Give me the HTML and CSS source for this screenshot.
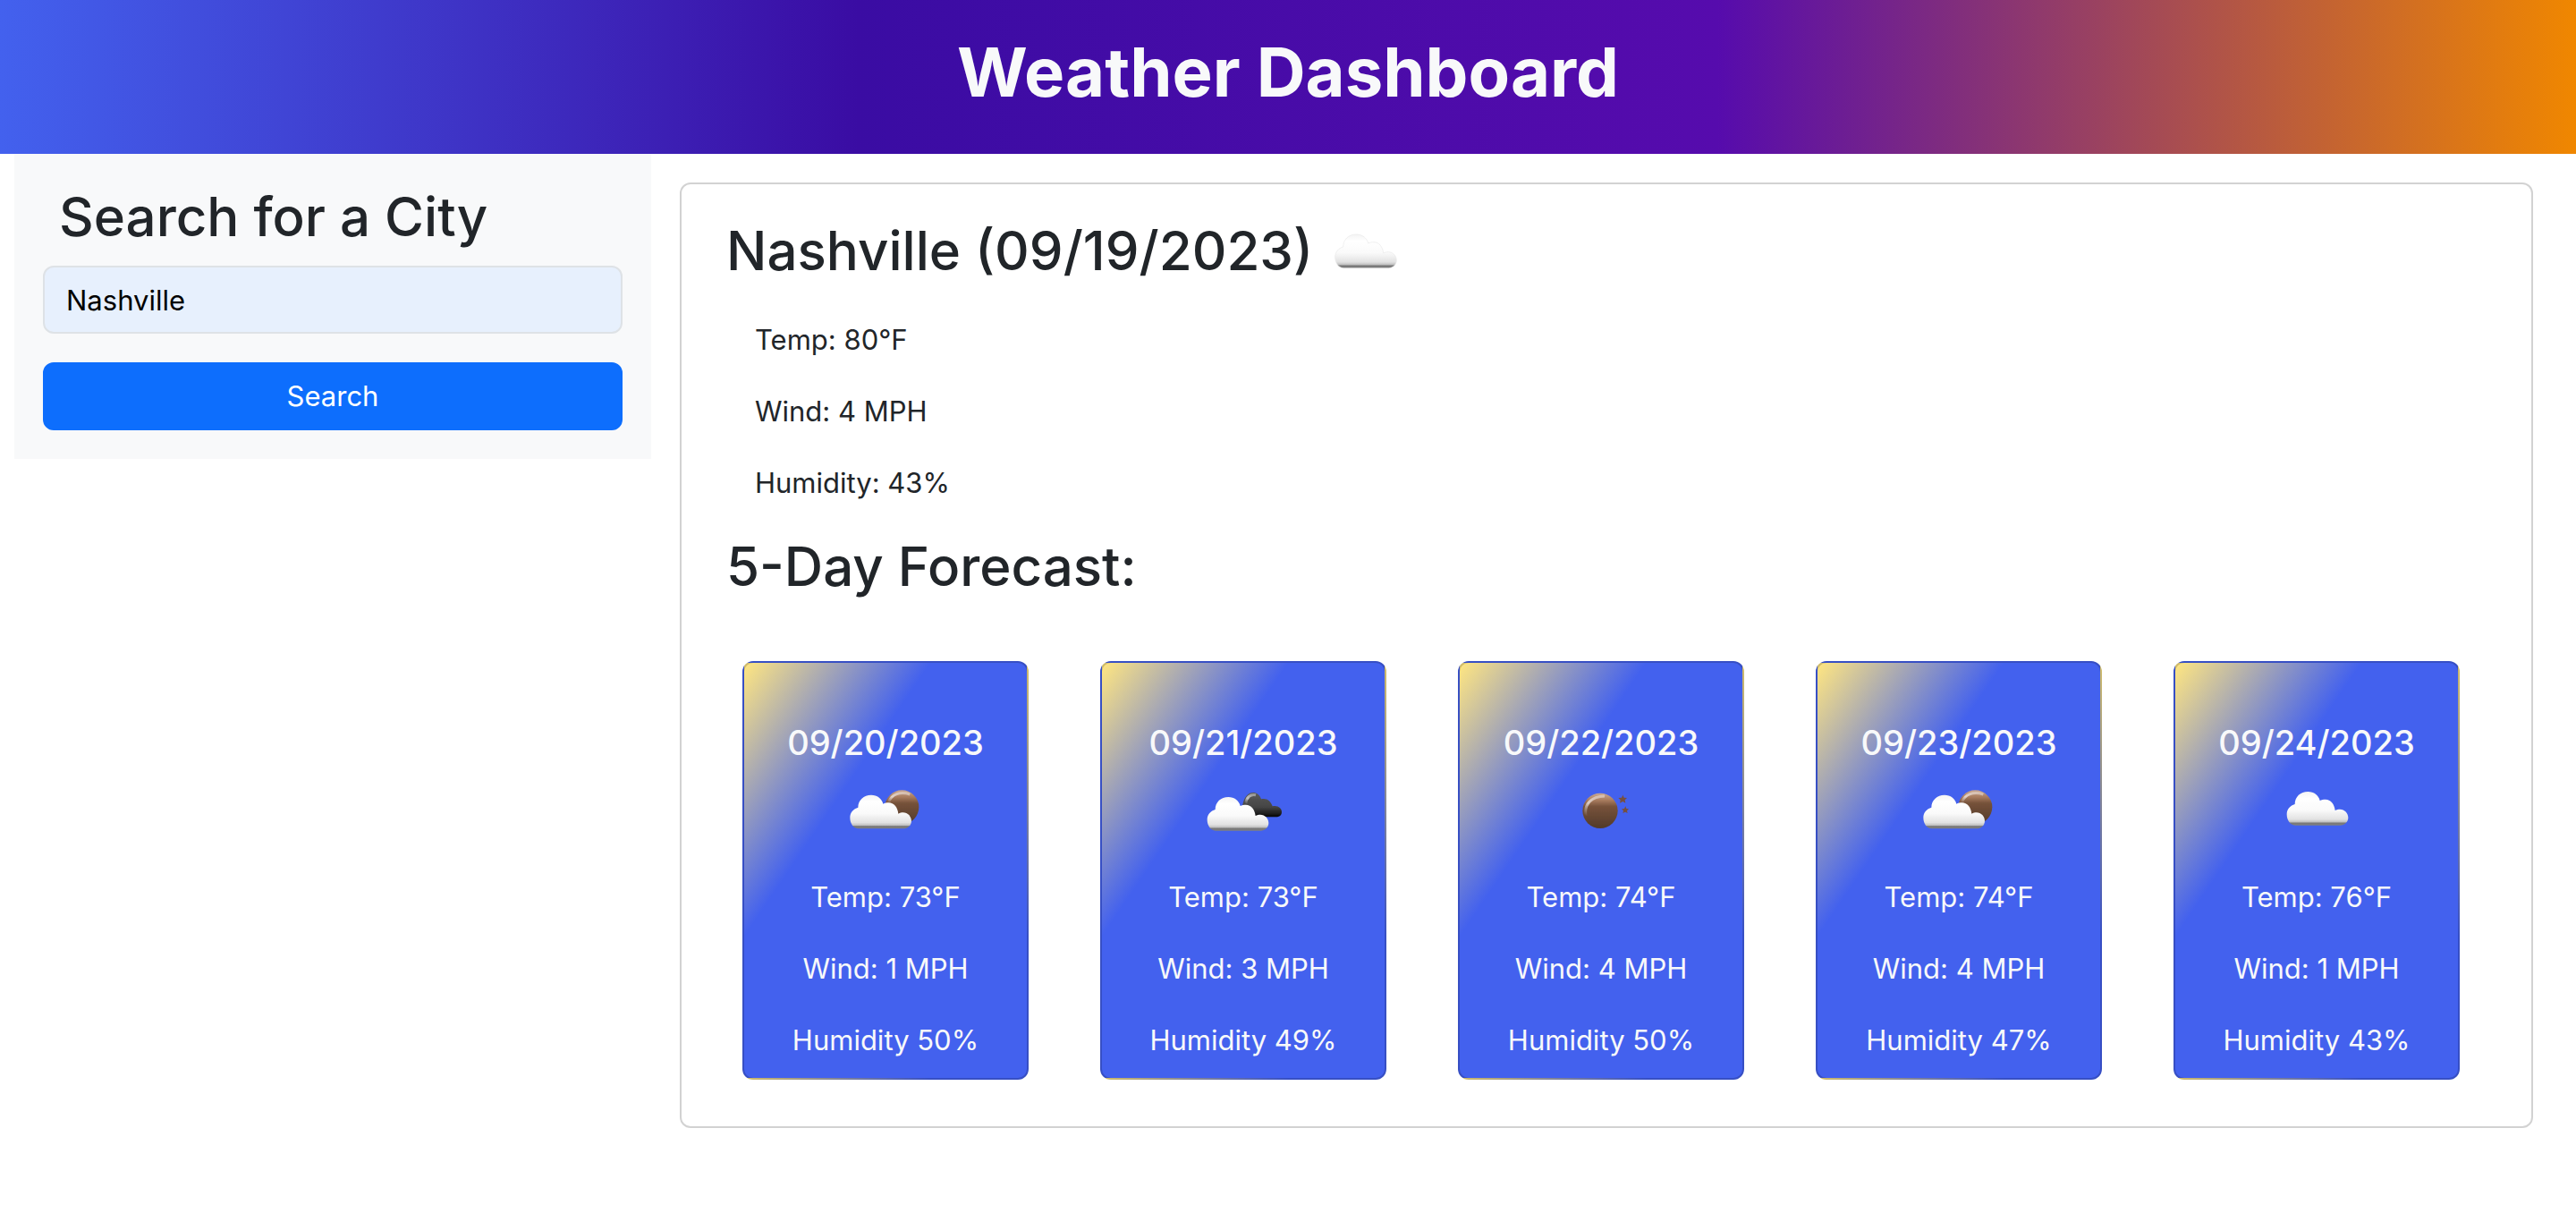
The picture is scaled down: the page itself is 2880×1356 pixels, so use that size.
FILE: index.html
```
<!DOCTYPE html>
<html lang="en">
<head>
<meta charset="utf-8">
<title>Weather Dashboard</title>
<link rel="stylesheet" href="styles.css">
</head>
<body>
<svg class="defs" aria-hidden="true">
  <defs>
    <linearGradient id="cloudFill" x1="0" y1="0" x2="0" y2="1">
      <stop offset="0" stop-color="#f4f4f4"/>
      <stop offset=".2" stop-color="#ffffff"/>
      <stop offset=".55" stop-color="#fafafa"/>
      <stop offset=".82" stop-color="#e2e2e2"/>
      <stop offset=".9" stop-color="#c0c0c0"/>
      <stop offset=".93" stop-color="#777777"/>
      <stop offset="1" stop-color="#808080"/>
    </linearGradient>
    <linearGradient id="darkFill" x1="0" y1="0" x2="0" y2="1">
      <stop offset="0" stop-color="#5a5a5a"/>
      <stop offset=".6" stop-color="#444444"/>
      <stop offset=".85" stop-color="#1c1c1c"/>
      <stop offset="1" stop-color="#050505"/>
    </linearGradient>
    <linearGradient id="moonFill" x1="0" y1="0" x2="0" y2="1">
      <stop offset="0" stop-color="#c9a893"/>
      <stop offset=".2" stop-color="#a87c5e"/>
      <stop offset=".38" stop-color="#76523a"/>
      <stop offset="1" stop-color="#523a2a"/>
    </linearGradient>
    <linearGradient id="shine" x1="0" y1="1" x2=".7" y2="0">
      <stop offset="0" stop-color="#ffffff" stop-opacity="0"/>
      <stop offset=".5" stop-color="#ffffff" stop-opacity=".65"/>
      <stop offset="1" stop-color="#ffffff" stop-opacity=".4"/>
    </linearGradient>
    <filter id="soft" x="-10%" y="-10%" width="120%" height="120%"><feGaussianBlur stdDeviation="1.6"/></filter>
    <path id="cloud" d="M108 188C92 188 80 171 80 151C80 134 92 121 107 117C107 92 126 75 151 75C171 75 187 87 191 105C196 102 203 101 210 101C227 101 240 117 242 138C247 135 253 134 258 134C274 134 286 147 286 162C286 177 273 188 259 188Z"/>
  </defs>
</svg>

<header class="banner">
  <h1 class="banner-title">Weather Dashboard</h1>
</header>

<div class="layout">
  <aside class="sidebar">
    <form class="search">
      <label class="heading search-label" for="city">Search for a City</label>
      <input class="search-input" id="city" type="text" value="Nashville">
      <button class="search-button" type="button">Search</button>
    </form>
  </aside>

  <main class="panel">
    <section class="current">
      <h2 class="heading current-title">Nashville (09/19/2023)
        <svg class="icon" viewBox="30 -18 300 300" role="img" aria-label="Cloudy"><use href="#cloud" fill="url(#cloudFill)" stroke="#e9e9e9" stroke-width="2" filter="url(#soft)"/></svg>
      </h2>
      <ul class="stats current-stats">
        <li>Temp: 80°F</li>
        <li>Wind: 4 MPH</li>
        <li>Humidity: 43%</li>
      </ul>
    </section>

    <h2 class="heading forecast-title">5-Day Forecast:</h2>
    <div class="forecast">
      <article class="card">
        <h3 class="card-date">09/20/2023</h3>
        <svg class="icon" viewBox="30 -18 300 300" role="img" aria-label="Partly cloudy night"><g filter="url(#soft)"><circle cx="235" cy="127" r="57" fill="url(#moonFill)"/><path d="M190 112C200 82 230 74 262 84" fill="none" stroke="url(#shine)" stroke-width="9"/><use href="#cloud" x="-19" y="11" fill="url(#cloudFill)"/></g></svg>
        <ul class="stats">
          <li>Temp: 73°F</li>
          <li>Wind: 1 MPH</li>
          <li>Humidity 50%</li>
        </ul>
      </article>
      <article class="card">
        <h3 class="card-date">09/21/2023</h3>
        <svg class="icon" viewBox="30 -18 300 300" role="img" aria-label="Broken clouds"><g filter="url(#soft)"><path d="M190 160L178 118C184 92 196 78 213 78C225 78 236 86 240 100C258 95 272 105 278 124C296 120 309 130 309 143C309 154 300 160 290 160Z" fill="url(#darkFill)"/><path d="M188 116C190 94 204 82 222 86" fill="none" stroke="url(#shine)" stroke-width="9"/><use href="#cloud" x="-21" y="18" fill="url(#cloudFill)"/></g></svg>
        <ul class="stats">
          <li>Temp: 73°F</li>
          <li>Wind: 3 MPH</li>
          <li>Humidity 49%</li>
        </ul>
      </article>
      <article class="card">
        <h3 class="card-date">09/22/2023</h3>
        <svg class="icon" viewBox="30 -18 300 300" role="img" aria-label="Clear night"><g filter="url(#soft)"><circle cx="177" cy="139" r="59" fill="url(#moonFill)"/><path d="M129 156C122 116 148 91 192 90" fill="none" stroke="url(#shine)" stroke-width="9"/><path fill="#76503f" d="M253 86L257 95L267 96L260 103L262 113L253 108L243 113L245 103L238 96L249 95Z"/><path fill="#76503f" d="M262 124L265 132L273 133L267 139L269 147L261 143L253 147L255 139L249 133L258 132Z"/></g></svg>
        <ul class="stats">
          <li>Temp: 74°F</li>
          <li>Wind: 4 MPH</li>
          <li>Humidity 50%</li>
        </ul>
      </article>
      <article class="card">
        <h3 class="card-date">09/23/2023</h3>
        <svg class="icon" viewBox="30 -18 300 300" role="img" aria-label="Partly cloudy night"><g filter="url(#soft)"><circle cx="235" cy="127" r="57" fill="url(#moonFill)"/><path d="M190 112C200 82 230 74 262 84" fill="none" stroke="url(#shine)" stroke-width="9"/><use href="#cloud" x="-19" y="11" fill="url(#cloudFill)"/></g></svg>
        <ul class="stats">
          <li>Temp: 74°F</li>
          <li>Wind: 4 MPH</li>
          <li>Humidity 47%</li>
        </ul>
      </article>
      <article class="card">
        <h3 class="card-date">09/24/2023</h3>
        <svg class="icon" viewBox="30 -18 300 300" role="img" aria-label="Cloudy"><use href="#cloud" fill="url(#cloudFill)" filter="url(#soft)"/></svg>
        <ul class="stats">
          <li>Temp: 76°F</li>
          <li>Wind: 1 MPH</li>
          <li>Humidity 43%</li>
        </ul>
      </article>
    </div>
  </main>
</div>
</body>
</html>
```
FILE: styles.css
```
* {
  box-sizing: border-box;
}

body {
  margin: 0;
  background: #fff;
  color: #212529;
  font-family: Inter, "Liberation Sans", sans-serif;
  font-size: 31px;
  line-height: 48px;
}

h1, h2, h3, ul {
  margin: 0;
  padding: 0;
}

.defs {
  position: absolute;
  width: 0;
  height: 0;
}

.banner {
  padding: 32px 32px 44px;
  background: linear-gradient(90deg, #4361ee, #3a0ca3, #560bad, #f08700);
  color: #f8f9fa;
  text-align: center;
}

.banner-title {
  font-size: 76px;
  font-weight: 700;
  line-height: 96px;
}

.layout {
  display: flex;
  align-items: flex-start;
  padding: 0 16px;
}

.sidebar {
  flex: 0 0 25%;
  padding: 32px;
  background: #f8f9fa;
}

.search {
  display: flex;
  flex-direction: column;
}

.heading {
  font-size: 60px;
  font-weight: 500;
  line-height: 77px;
}

.search-label {
  padding: 0 18px;
  margin-bottom: 16px;
}

.search-input,
.search-button {
  width: 100%;
  height: 76px;
  padding: 12px 24px;
  border-radius: 12px;
  font: inherit;
}

.search-input {
  margin-bottom: 32px;
  border: 2px solid #dee2e6;
  background: #e7f0fd;
  color: #000;
}

.search-button {
  border: 2px solid #0d6efd;
  background: #0d6efd;
  color: #fff;
}

.panel {
  flex: 1;
  margin: 32px 32px 0;
  padding: 36px 80px 52px 68px;
  border: 2px solid rgba(0, 0, 0, .175);
  border-radius: 12px;
}

.current,
.forecast-title {
  margin-left: -18px;
}

.current-title {
  display: flex;
  align-items: center;
  gap: 8px;
  height: 77px;
  margin-bottom: 37px;
}

.icon {
  display: block;
  flex: none;
  width: 100px;
  height: 100px;
}

.stats {
  display: flex;
  flex-direction: column;
  gap: 32px;
  list-style: none;
}

.current-stats {
  padding-left: 32px;
  margin-bottom: 31px;
}

.forecast-title {
  margin-bottom: 67px;
}

.forecast {
  display: grid;
  grid-template-columns: repeat(5, 1fr);
  gap: 80px;
}

.card {
  display: flex;
  flex-direction: column;
  align-items: center;
  padding: 65px 16px 18px;
  border: 2px solid rgba(0, 0, 0, .175);
  border-radius: 12px;
  background: linear-gradient(to bottom right, #ffe681, #4361ee 33%);
  color: #f8f9fa;
  text-align: center;
}

.card-date {
  font-size: 38px;
  font-weight: 500;
  line-height: 48px;
}

.card .icon {
  margin-bottom: 25px;
}
```
